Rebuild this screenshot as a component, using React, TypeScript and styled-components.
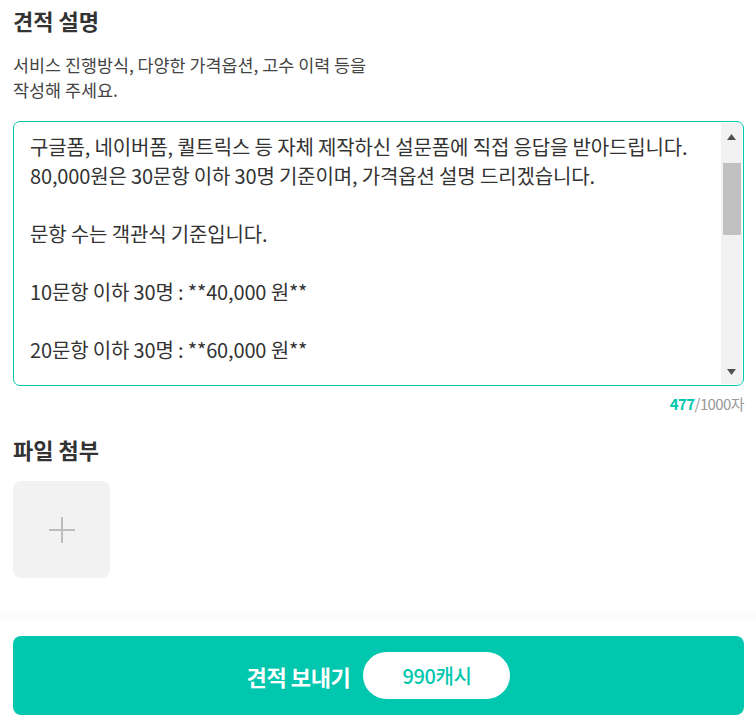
import styled, { createGlobalStyle } from 'styled-components';

const GlobalStyle = createGlobalStyle`
  body {
    margin: 0;
    background: #fff;
    font-family: "Noto Sans CJK KR", "Noto Sans", sans-serif;
    color: #333;
  }
`;

const Page = styled.main`
  width: 756px;
  padding: 0 12px 0 13px;
  box-sizing: border-box;
`;

const Title = styled.h2`
  margin: 0;
  font-size: 22px;
  font-weight: 700;
  line-height: 28px;
  color: #333;
  padding-top: 6px;
`;

const Guide = styled.p`
  margin: 18px 0 0;
  font-size: 17.4px;
  line-height: 25px;
  color: #444;
`;

const Editor = styled.div`
  margin-top: 19px;
  height: 265px;
  border: 1px solid #00c7ae;
  border-radius: 7px;
  display: flex;
  overflow: hidden;
  box-sizing: border-box;
`;

const Body = styled.div`
  flex: 1;
  padding: 10px 16px 0;
  font-size: 20px;
  line-height: 29px;
  color: #333;
  white-space: pre-wrap;
  letter-spacing: -0.15px;
`;

const Track = styled.div`
  width: 21px;
  background: #f1f1f1;
  display: flex;
  flex-direction: column;
  align-items: center;
  margin: 1px 1px 1px 0;
`;

const Arrow = styled.div<{ down?: boolean }>`
  height: 17px;
  display: flex;
  align-items: center;
  justify-content: center;
  margin-top: ${p => (p.down ? 'auto' : '5px')};
  margin-bottom: ${p => (p.down ? '4px' : '0')};
`;

const Thumb = styled.div`
  width: 18px;
  height: 72px;
  margin-top: 18px;
  background: #c1c1c1;
`;

const Counter = styled.div`
  margin-top: 9px;
  text-align: right;
  font-size: 15px;
  color: #999;
  letter-spacing: -0.6px;
  line-height: 18px;
`;

const Count = styled.b`
  color: #00c7ae;
  font-weight: 700;
`;

const FileTitle = styled(Title)`
  padding-top: 22px;
`;

const Upload = styled.button`
  margin-top: 18px;
  width: 97px;
  height: 97px;
  border: none;
  border-radius: 8px;
  background: #f2f2f2;
  display: flex;
  align-items: center;
  justify-content: center;
  padding: 0;
`;

const Divider = styled.div`
  height: 20px;
  margin: 25px -12px 0 -13px;
  background: linear-gradient(180deg, #fff 0%, #fbfbfb 70%, #fff 100%);
`;

const Submit = styled.button`
  margin-top: 13px;
  width: 100%;
  height: 79px;
  border: none;
  border-radius: 8px;
  background: #00c7ae;
  display: flex;
  align-items: center;
  justify-content: center;
  gap: 13px;
  font-family: inherit;
  color: #fff;
  font-size: 22px;
  font-weight: 700;
  letter-spacing: -0.4px;
`;

const Price = styled.span`
  width: 147px;
  height: 47px;
  border-radius: 24px;
  background: #fff;
  color: #00c7ae;
  font-size: 20px;
  font-weight: 500;
  display: flex;
  align-items: center;
  justify-content: center;
  letter-spacing: -0.4px;
`;

const text = `구글폼, 네이버폼, 퀄트릭스 등 자체 제작하신 설문폼에 직접 응답을 받아드립니다.
80,000원은 30문항 이하 30명 기준이며, 가격옵션 설명 드리겠습니다.

문항 수는 객관식 기준입니다.

10문항 이하 30명 : **40,000 원**

20문항 이하 30명 : **60,000 원**`;

export default function App() {
  return (
    <Page>
      <GlobalStyle />
      <Title>견적 설명</Title>
      <Guide>
        서비스 진행방식, 다양한 가격옵션, 고수 이력 등을
        <br />
        작성해 주세요.
      </Guide>
      <Editor>
        <Body>{text}</Body>
        <Track>
          <Arrow>
            <svg width="9" height="6" viewBox="0 0 9 6">
              <path d="M4.5 0L9 6H0z" fill="#505050" />
            </svg>
          </Arrow>
          <Thumb />
          <Arrow down>
            <svg width="9" height="6" viewBox="0 0 9 6">
              <path d="M0 0h9L4.5 6z" fill="#505050" />
            </svg>
          </Arrow>
        </Track>
      </Editor>
      <Counter>
        <Count>477</Count>/1000자
      </Counter>
      <FileTitle>파일 첨부</FileTitle>
      <Upload aria-label="파일 추가">
        <svg width="28" height="28" viewBox="0 0 28 28">
          <path d="M14 1v26M1 14h26" stroke="#bdbdbd" strokeWidth="2" />
        </svg>
      </Upload>
      <Divider />
      <Submit>
        견적 보내기
        <Price>990캐시</Price>
      </Submit>
    </Page>
  );
}
